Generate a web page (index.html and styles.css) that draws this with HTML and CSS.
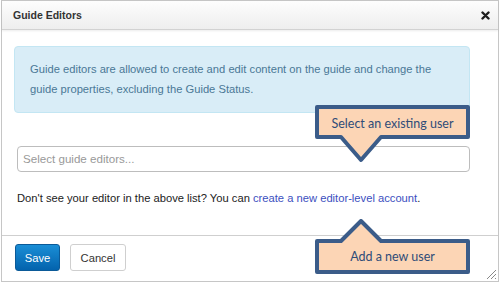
FILE: index.html
```html
<!DOCTYPE html>
<html>
<head>
<meta charset="utf-8">
<link rel="stylesheet" href="styles.css">
</head>
<body>
<div class="dialog">
  <div class="header">
    <span class="title">Guide Editors</span>
    <svg class="close" width="9" height="9" viewBox="0 0 9 9"><path d="M1.5 1.5 L7.5 7.5 M7.5 1.5 L1.5 7.5" stroke="#1e1e1e" stroke-width="2.4" stroke-linecap="round"/></svg>
  </div>
  <div class="body">
    <div class="info">Guide editors are allowed to create and edit content on the guide and change the guide properties, excluding the Guide Status.</div>
    <div class="select">Select guide editors...</div>
    <p class="hint">Don't see your editor in the above list? You can <a href="#" class="link">create a new editor-level account</a>.</p>
  </div>
  <div class="footer">
    <button class="btn btn-primary">Save</button>
    <button class="btn btn-default">Cancel</button>
  </div>
  <svg class="resize" width="12" height="12" viewBox="0 0 12 12"><path d="M11 2 L2 11 M11 6 L6 11 M11 10 L10 11" stroke="#888" stroke-width="1"/></svg>

  <div class="callout callout-down">
    <svg width="155" height="58" viewBox="0 0 155 58"><path d="M2 2 H153 V32 H66 L46 55 L26 32 H2 Z" fill="#fcd5b5" stroke="#3b5c89" stroke-width="4" stroke-linejoin="round"/></svg>
    <span class="callout-label">Select an existing user</span>
  </div>
  <div class="callout callout-up">
    <svg width="155" height="57" viewBox="0 0 155 57"><path d="M2 22 H26 L46 2 L66 22 H153 V53 H2 Z" fill="#fcd5b5" stroke="#3b5c89" stroke-width="4" stroke-linejoin="round"/></svg>
    <span class="callout-label">Add a new user</span>
  </div>
</div>
</body>
</html>
```

FILE: styles.css
```css
html, body {
  margin: 0;
  padding: 0;
  background: #ffffff;
}
body {
  font-family: "Liberation Sans", Arial, sans-serif;
  font-size: 11.2px;
  color: #222;
}
.dialog {
  position: relative;
  margin-left: 1px;
  width: 496px;
  height: 280px;
  border: 1px solid #c6c6c6;
  display: flex;
  flex-direction: column;
}
.header {
  height: 28px;
  flex: none;
  display: flex;
  align-items: center;
  justify-content: space-between;
  padding: 0 8px 0 11px;
  background: linear-gradient(#fdfdfd, #eeeeee);
  border-bottom: 1px solid #d2d2d2;
  box-shadow: 0 1px 2px rgba(0,0,0,0.08);
}
.title {
  font-weight: bold;
  font-size: 10.5px;
  color: #333;
}
.close {
  display: block;
  margin-top: 1px;
}
.body {
  flex: 1;
  padding: 16px 28px 0 12px;
}
.info {
  background: #d9edf7;
  border: 1px solid #c3e6f3;
  border-radius: 4px;
  color: #4a7896;
  line-height: 20px;
  padding: 12px 15px 13px 15px;
}
.select {
  margin: 33px 0 0 3px;
  height: 24px;
  width: 446px;
  border: 1px solid #bdbdbd;
  border-radius: 4px;
  color: #999;
  line-height: 24px;
  padding-left: 5px;
  font-size: 11.6px;
}
.hint {
  margin: 20px 0 0 3px;
  color: #222;
}
.link {
  color: #3b4fc0;
  text-decoration: none;
}
.footer {
  flex: none;
  box-sizing: border-box;
  height: 46px;
  border-top: 1px solid #cfcfcf;
  display: flex;
  align-items: flex-start;
  gap: 10px;
  padding: 8px 0 0 13px;
}
.btn {
  font-family: "Liberation Sans", Arial, sans-serif;
  font-size: 11.2px;
  height: 27px;
  border-radius: 3px;
  padding: 0;
  margin: 0;
}
.btn-primary {
  width: 45px;
  color: #fff;
  background: linear-gradient(#1a8ed6, #0363ad);
  border: 1px solid #0b5a98;
}
.btn-default {
  width: 56px;
  color: #333;
  background: #fff;
  border: 1px solid #cfcfcf;
}
.resize {
  position: absolute;
  right: 1px;
  bottom: 1px;
}
.callout {
  position: absolute;
  left: 313px;
  width: 155px;
}
.callout svg {
  display: block;
}
.callout-down {
  top: 104px;
  height: 58px;
}
.callout-up {
  top: 218px;
  height: 57px;
}
.callout-label {
  position: absolute;
  left: 0;
  right: 0;
  text-align: center;
  font-family: Lato, "Open Sans", sans-serif;
  font-size: 12.5px;
  color: #2f4c78;
  line-height: 16px;
}
.callout-down .callout-label {
  top: 11px;
}
.callout-up .callout-label {
  top: 30px;
}
```
